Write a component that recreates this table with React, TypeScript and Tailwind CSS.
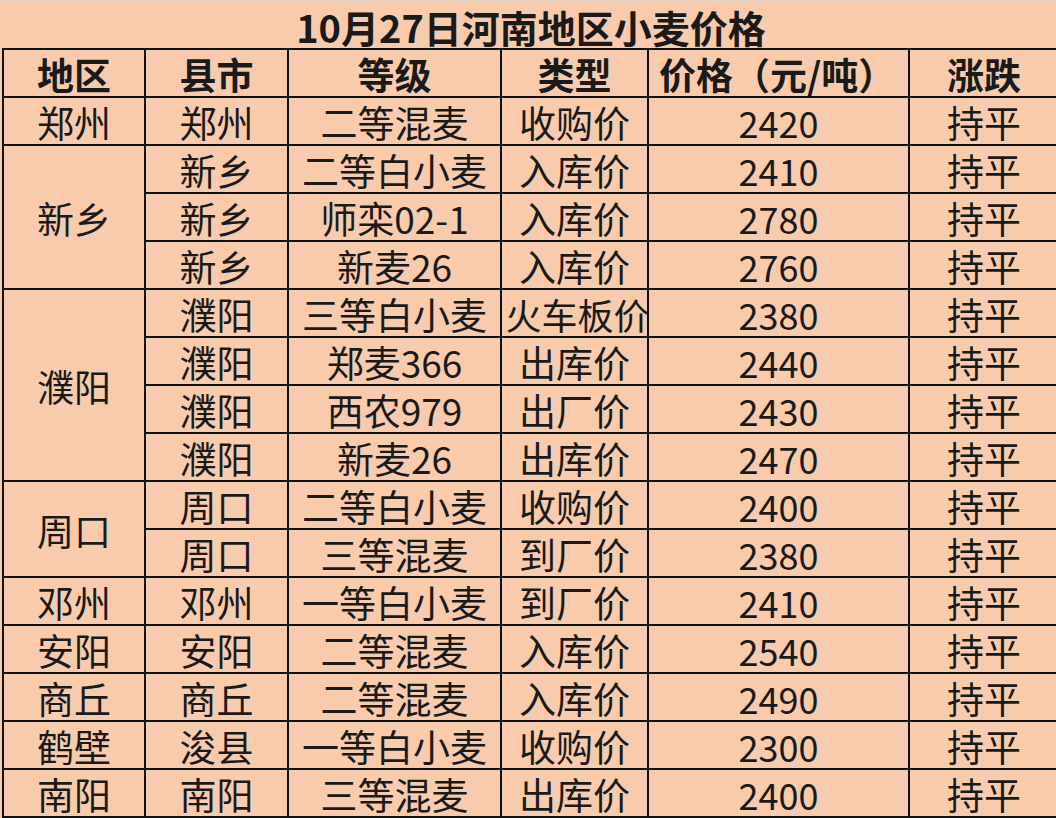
const rows: { region?: [string, number]; city: string; grade: string; type: string; price: string }[] = [
  { region: ["郑州", 1], city: "郑州", grade: "二等混麦", type: "收购价", price: "2420" },
  { region: ["新乡", 3], city: "新乡", grade: "二等白小麦", type: "入库价", price: "2410" },
  { city: "新乡", grade: "师栾02-1", type: "入库价", price: "2780" },
  { city: "新乡", grade: "新麦26", type: "入库价", price: "2760" },
  { region: ["濮阳", 4], city: "濮阳", grade: "三等白小麦", type: "火车板价", price: "2380" },
  { city: "濮阳", grade: "郑麦366", type: "出库价", price: "2440" },
  { city: "濮阳", grade: "西农979", type: "出厂价", price: "2430" },
  { city: "濮阳", grade: "新麦26", type: "出库价", price: "2470" },
  { region: ["周口", 2], city: "周口", grade: "二等白小麦", type: "收购价", price: "2400" },
  { city: "周口", grade: "三等混麦", type: "到厂价", price: "2380" },
  { region: ["邓州", 1], city: "邓州", grade: "一等白小麦", type: "到厂价", price: "2410" },
  { region: ["安阳", 1], city: "安阳", grade: "二等混麦", type: "入库价", price: "2540" },
  { region: ["商丘", 1], city: "商丘", grade: "二等混麦", type: "入库价", price: "2490" },
  { region: ["鹤壁", 1], city: "浚县", grade: "一等白小麦", type: "收购价", price: "2300" },
  { region: ["南阳", 1], city: "南阳", grade: "三等混麦", type: "出库价", price: "2400" },
]

const cell = "border-2 border-[#111] text-center align-middle whitespace-nowrap p-0 pt-[3px] leading-none"

export default function App() {
  return (
    <div
      className="w-[1056px] h-[818px] overflow-hidden bg-[#f8cbad] text-[#1a1a1a]"
      style={{ fontFamily: '"Noto Sans CJK SC", "Noto Sans", sans-serif' }}
    >
      <table className="ml-[2px] w-[1062px] table-fixed border-collapse text-[37px]">
        <colgroup>
          <col className="w-[142px]" />
          <col className="w-[143px]" />
          <col className="w-[213px]" />
          <col className="w-[147px]" />
          <col className="w-[261px]" />
          <col className="w-[156px]" />
        </colgroup>
        <tbody>
          <tr className="h-[48px]">
            <td colSpan={6} className="border-t border-t-[#e4d6cc] text-center align-middle font-bold text-[38px] leading-none pt-[6px] pr-[6px]">
              10月27日河南地区小麦价格
            </td>
          </tr>
          <tr className="h-[48px] font-bold">
            <td className={cell}>地区</td>
            <td className={cell}>县市</td>
            <td className={cell}>等级</td>
            <td className={cell}>类型</td>
            <td className={cell + " text-left pl-[10px]"}>价格（元/吨）</td>
            <td className={cell + " text-left pl-[37px]"}>涨跌</td>
          </tr>
          {rows.map((r, i) => (
            <tr key={i} className="h-[48px]">
              {r.region && (
                <td rowSpan={r.region[1]} className={cell}>
                  {r.region[0]}
                </td>
              )}
              <td className={cell}>{r.city}</td>
              <td className={cell}>{r.grade}</td>
              <td className={cell + " overflow-visible"}>
                <span className={r.type.length > 3 ? "inline-block -ml-[2px] -mr-[8px] text-[36px]" : ""}>{r.type}</span>
              </td>
              <td className={cell + " text-[36px]"}>{r.price}</td>
              <td className={cell + " text-left pl-[37px]"}>持平</td>
            </tr>
          ))}
        </tbody>
      </table>
    </div>
  )
}
